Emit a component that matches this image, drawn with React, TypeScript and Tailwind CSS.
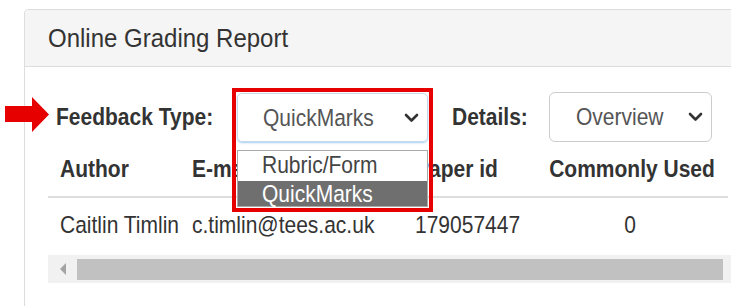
import React from 'react';

function Chevron() {
  return (
    <svg width="15" height="10" viewBox="0 0 15 10" className="shrink-0">
      <polyline points="2,2 7.5,7.5 13,2" fill="none" stroke="#333" strokeWidth="2.6" strokeLinecap="round" strokeLinejoin="round" />
    </svg>
  );
}

// the screenshot's text is a little taller than it is wide
function T({ children }: { children: React.ReactNode }) {
  return <span className="inline-block scale-y-[1.1] whitespace-nowrap">{children}</span>;
}

export default function App() {
  const rows = [{ author: 'Caitlin Timlin', email: 'c.timlin@tees.ac.uk', paper: '179057447', used: '0' }];

  return (
    <div className="relative w-[731px] h-[306px] overflow-hidden bg-white font-['Liberation_Sans',Arial,sans-serif] text-[#333]">
      {/* Panel */}
      <div className="ml-[24px] mt-[9px] w-[730px] h-[320px] border border-[#dddddd] rounded-tl-[4px]">
        <div className="h-[57px] bg-[#f5f5f5] border-b border-[#dddddd] rounded-tl-[4px] flex items-center pl-[23px] text-[24px]">
          <T>Online Grading Report</T>
        </div>

        <div className="pt-[25px] pl-[23px]">
          {/* Filters */}
          <div className="ml-[8px] flex items-center h-[50px]">
            <div className="w-[181px] text-[21px] font-bold"><T>Feedback Type:</T></div>
            <div className="relative w-[191px] h-[50px]">
              <div className="h-[49px] mt-[1px] rounded-[5px] border border-[#c7d9ea] shadow-[0_1px_2px_rgba(102,175,233,0.6)] flex items-center justify-between pl-[25px] pr-[8px] text-[21px] text-[#555]">
                <T>QuickMarks</T>
                <Chevron />
              </div>
              {/* Open option list */}
              <div className="absolute left-0 top-[58px] w-[191px] bg-white border border-[#a9a9a9] text-[21px] z-10">
                <div className="h-[30px] flex items-center pl-[24px] pb-[3px] text-[#444]"><T>Rubric/Form</T></div>
                <div className="h-[25px] flex items-center pl-[24px] bg-[#6f6f6f] text-white"><T>QuickMarks</T></div>
              </div>
              {/* Annotation box */}
              <div className="absolute left-[-5px] top-[-4px] w-[201px] h-[124px] border-[4px] border-[#e60000] z-20" />
            </div>
            <div className="ml-[24px] w-[97px] text-[21px] font-bold"><T>Details:</T></div>
            <div className="w-[163px] h-[50px] rounded-[6px] border border-[#cccccc] flex items-center justify-between pl-[26px] pr-[8px] text-[21px] text-[#555]">
              <T>Overview</T>
              <Chevron />
            </div>
          </div>

          {/* Table */}
          <div className="w-[680px] text-[21px]">
            <div className="grid grid-cols-[132px_223px_133px_192px] h-[56px] items-center border-b-2 border-[#dddddd] font-bold">
              <div className="pl-[12px]"><T>Author</T></div>
              <div className="pl-[12px]"><T>E-mail</T></div>
              <div className="pl-[12px]"><T>Paper id</T></div>
              <div className="px-[12px] text-center"><T>Commonly Used</T></div>
            </div>
            {rows.map((r) => (
              <div key={r.paper} className="grid grid-cols-[132px_223px_133px_192px] h-[54px] items-center">
                <div className="pl-[12px]"><T>{r.author}</T></div>
                <div className="pl-[12px]"><T>{r.email}</T></div>
                <div className="pl-[12px]"><T>{r.paper}</T></div>
                <div className="px-[12px] text-center pr-[16px]"><T>{r.used}</T></div>
              </div>
            ))}
          </div>

          {/* Horizontal scrollbar */}
          <div className="mt-[3px] w-[690px] h-[28px] bg-[#f1f1f1] flex items-center">
            <div className="w-[29px] flex items-center justify-center">
              <svg width="8" height="12" viewBox="0 0 8 12">
                <polygon points="7,0 7,12 1,6" fill="#a3a3a3" />
              </svg>
            </div>
            <div className="w-[646px] h-[21px] bg-[#c1c1c1]" />
          </div>
        </div>
      </div>

      {/* Red arrow annotation */}
      <svg className="absolute left-0 top-[90px]" width="60" height="50" viewBox="0 0 60 50">
        <polygon points="5,16 32,16 32,7 49,24.5 32,42 32,32 5,32" fill="#e60000" />
      </svg>
    </div>
  );
}
